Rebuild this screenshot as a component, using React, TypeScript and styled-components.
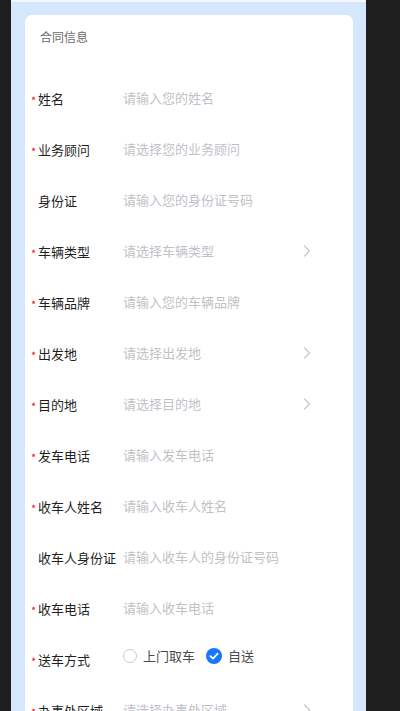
import styled, {createGlobalStyle} from "styled-components";
import {FC} from "react";

const GlobalStyle = createGlobalStyle`
    html, body {
        margin: 0;
        padding: 0;
        background: #1e1e1e;
        font-family: "Noto Sans CJK SC", "Noto Sans", sans-serif;
    }
`

type Field = {
    label: string
    placeholder?: string
    required?: boolean
    arrow?: boolean
    radio?: boolean
}

const fields: Field[] = [
    {label: "姓名", placeholder: "请输入您的姓名", required: true},
    {label: "业务顾问", placeholder: "请选择您的业务顾问", required: true},
    {label: "身份证", placeholder: "请输入您的身份证号码"},
    {label: "车辆类型", placeholder: "请选择车辆类型", required: true, arrow: true},
    {label: "车辆品牌", placeholder: "请输入您的车辆品牌", required: true},
    {label: "出发地", placeholder: "请选择出发地", required: true, arrow: true},
    {label: "目的地", placeholder: "请选择目的地", required: true, arrow: true},
    {label: "发车电话", placeholder: "请输入发车电话", required: true},
    {label: "收车人姓名", placeholder: "请输入收车人姓名", required: true},
    {label: "收车人身份证", placeholder: "请输入收车人的身份证号码"},
    {label: "收车电话", placeholder: "请输入收车电话", required: true},
    {label: "送车方式", required: true, radio: true},
    {label: "办事处区域", placeholder: "请选择办事处区域", required: true, arrow: true},
]

const Chevron: FC = () => (<ArrowSvg width="8" height="12" viewBox="0 0 8 12">
    <path d="M1.5 1 L6.5 6 L1.5 11" fill="none" stroke="#c8c9cc" strokeWidth="1.4" strokeLinecap="round"
          strokeLinejoin="round"/>
</ArrowSvg>)

const CheckDot: FC = () => (<svg width="16" height="16" viewBox="0 0 16 16">
    <circle cx="8" cy="8" r="8" fill="#1677ff"/>
    <path d="M4.4 8.2 L7 10.6 L11.6 5.6" fill="none" stroke="#fff" strokeWidth="1.8" strokeLinecap="round"
          strokeLinejoin="round"/>
</svg>)

export default function App() {
    return (<>
        <GlobalStyle/>
        <Page>
            <Column>
                <TopStrip/>
                <Card>
                    <Header>合同信息</Header>
                    {fields.map(f => (<Row key={f.label}>
                        <Star>{f.required ? "*" : ""}</Star>
                        <Label>{f.label}</Label>
                        {f.radio ? (<RadioGroup>
                            <RadioItem>
                                <EmptyDot/>
                                <RadioText>上门取车</RadioText>
                            </RadioItem>
                            <RadioItem>
                                <CheckDot/>
                                <RadioText>自送</RadioText>
                            </RadioItem>
                        </RadioGroup>) : (<Placeholder>{f.placeholder}</Placeholder>)}
                        {f.arrow && <Chevron/>}
                    </Row>))}
                </Card>
            </Column>
        </Page>
    </>)
}

const Page = styled.div`
    width: 400px;
    height: 711px;
    overflow: hidden;
    padding-left: 11px;
    box-sizing: border-box;
`

const Column = styled.div`
    width: 355px;
    height: 711px;
    background: #d5e7fd;
    box-sizing: border-box;
    padding: 0 13px 0 14px;
`

const TopStrip = styled.div`
    height: 2px;
    margin: 0 -13px 13px -14px;
    background: #f4f8fe;
`

const Card = styled.div`
    background: #fff;
    border-radius: 7px;
    padding-bottom: 20px;
`

const Header = styled.div`
    padding: 12px 15px 0;
    height: 20px;
    line-height: 20px;
    font-size: 12px;
    color: #6b6b6b;
    margin-bottom: 26px;
`

const Row = styled.div`
    display: flex;
    align-items: center;
    height: 51px;
    padding: 0 42px 0 6px;
`

const Star = styled.span`
    width: 7px;
    flex-shrink: 0;
    color: #ee0a24;
    font-size: 11px;
    line-height: 13px;
    padding-top: 4px;
`

const Label = styled.span`
    width: 85px;
    flex-shrink: 0;
    font-size: 13px;
    color: #1f1f1f;
    line-height: 20px;
`

const Placeholder = styled.span`
    flex: 1;
    font-size: 13px;
    color: #c0c2c7;
    line-height: 20px;
    white-space: nowrap;
    margin-top: -2px;
`

const ArrowSvg = styled.svg`
    flex-shrink: 0;
    margin-top: -2px;
`

const RadioGroup = styled.div`
    display: flex;
    align-items: center;
    gap: 11px;
    margin-top: -8px;
`

const RadioItem = styled.div`
    display: flex;
    align-items: center;
    gap: 6px;
`

const EmptyDot = styled.span`
    width: 14px;
    height: 14px;
    border-radius: 50%;
    border: 1px solid #c8c9cc;
    box-sizing: border-box;
`

const RadioText = styled.span`
    font-size: 13px;
    color: #4a4a4a;
    line-height: 20px;
`
